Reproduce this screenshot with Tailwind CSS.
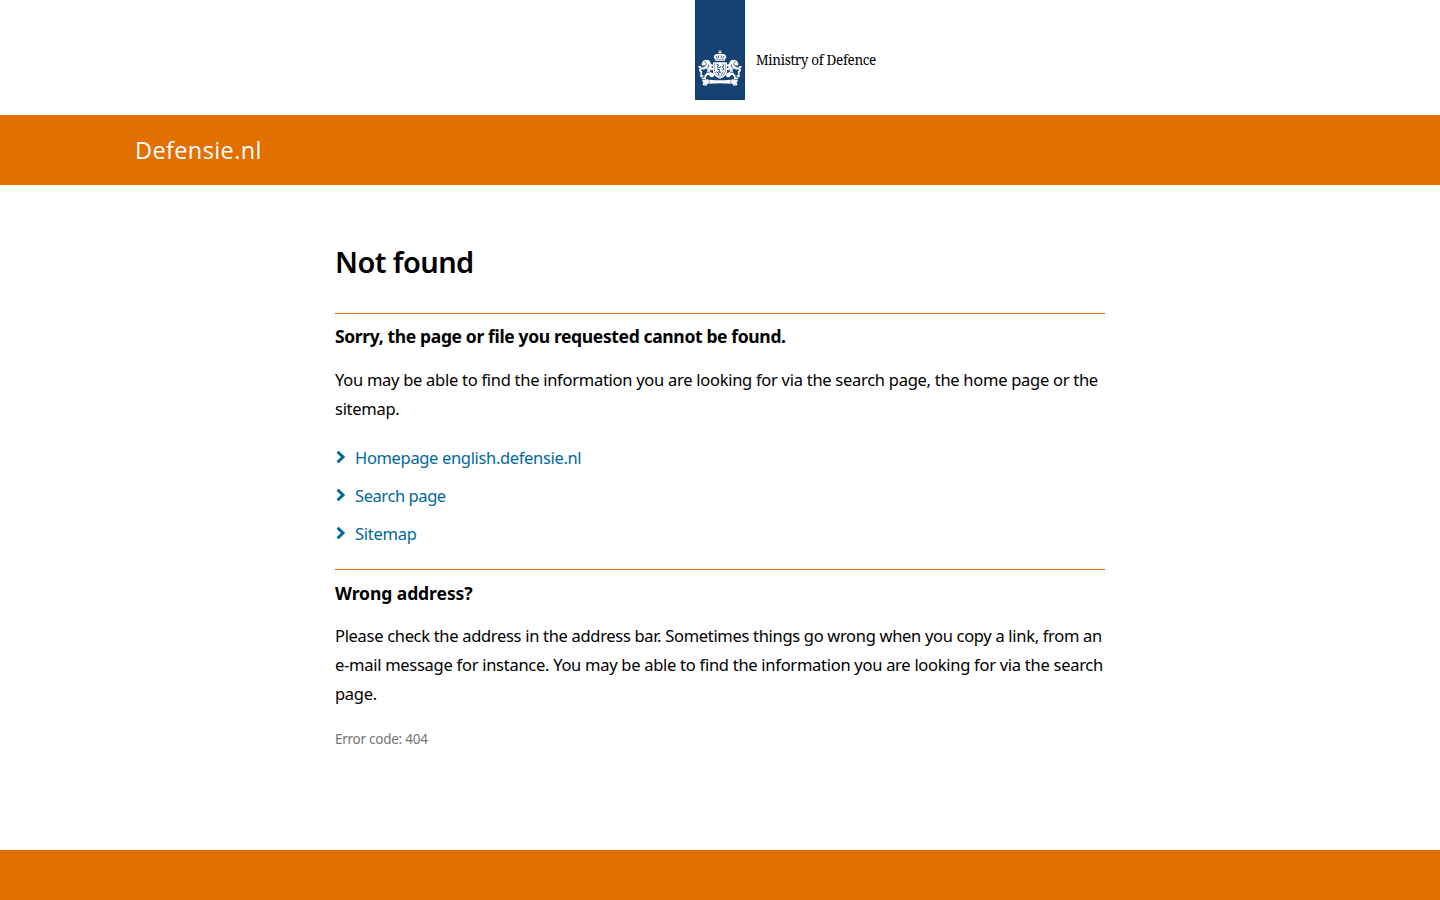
<!DOCTYPE html>
<html lang="en">
<head>
<meta charset="utf-8">
<title>Not found | Defensie.nl</title>
<script src="https://cdn.jsdelivr.net/npm/@tailwindcss/browser@4"></script>
</head>
<body class="flex h-screen flex-col overflow-hidden bg-white font-['Noto_Sans',sans-serif] text-[16.5px] leading-[29px] tracking-[-0.28px] text-black">
<header class="flex h-[115px] shrink-0 pl-[695px]">
  <svg class="h-[100px] w-[50px] shrink-0" viewBox="0 0 150 300">
    <rect width="150" height="300" fill="#154273"/>
    <g fill="#fff">
      <!-- crown -->
      <path d="M73.500 150h3v5h4v3h-4v5h-3v-5h-4v-3h4z"/>
      <path d="M61 182l-5-12 3-6 7-2 9 0 9 0 7 2 3 6-5 12z"/>
      <!-- lion, mirrored for the right side -->
      <g id="lion">
        <path d="M23 184l7-5 10 1 6 5 2 7 7 2-1 5-6 1 5 5 5-1v5l-8 2-5-3 1 8 8 4 4 6-4 6-8-1-5-7-6 3-3 6 2 5H22l-1-4 7-2 1-7 6-6 2-8-5-5-6 3-5-1-4 5-5-2 2-6 7-3 7-1 2-5-8 1-3-4 2-3z"/>
        <path d="M9 197l9 2 1 5-7-1z"/>
        <path d="M20 234l-5-6 2-8-5-9 3-3 7 7-2 8 6 4z"/>
      </g>
      <use href="#lion" transform="matrix(-1 0 0 1 150 0)"/>
      <!-- shield -->
      <path d="M54 187h42v28q0 13-21 21-21-8-21-21z"/>
      <!-- motto ribbon -->
      <path d="M43 239q32 4 64 0v12q-32-3-64 0zM21 240l18-2 3 4-1 9-6 2 1 4-14-2 3-6zM129 240l-18-2-3 4 1 9 6 2-1 4 14-2-3-6z"/>
    </g>
    <g fill="none" stroke="#154273" stroke-width="3">
      <path d="M63 168l4 7M71 166v8M79 166v8M87 168l-4 7" stroke-width="2.500"/>
      <path d="M61 178.500q14-2 28 0" stroke-width="1.500"/>
      <path d="M59 190v24q0 10 16 16 16-6 16-16v-24" stroke-width="1.500"/>
      <path d="M65 193l6 2-4 6 7 2 4-5M66 207l8 2-3 7 7 1M82 192l5 5-6 5 6 4-6 6M64 216l6 2 2 7M84 217l-5 7"/>
      <path d="M28 186l5 2M35 190l-4 8M42 193l-3 10M31 207l9 1M36 217l10-1M105 216l9 1M110 208l9-1M111 203l-3-10M119 198l-4-8M117 188l5-2" stroke-width="2.500"/>
    </g>
  </svg>
  <p class="pt-[46px] pl-[11px] font-['Noto_Serif',serif] text-[13.5px] tracking-[-0.34px]">Ministry of Defence</p>
</header>
<div class="flex h-[70px] shrink-0 items-center bg-[#e17000] pl-[135px] font-['Open_Sans',sans-serif] text-[23.5px] tracking-[0.38px] text-white">Defensie.nl</div>
<main class="mx-auto w-[770px] grow">
  <h1 class="mt-[61px] text-[29px] leading-[32px] font-semibold tracking-[-0.6px]">Not found</h1>
  <section class="mt-[35px] border-t border-[#e17000]">
    <h2 class="mt-2 text-[17.5px] font-bold tracking-[-0.36px]">Sorry, the page or file you requested cannot be found.</h2>
    <p class="mt-[14px] tracking-[-0.275px]">You may be able to find the information you are looking for via the search page, the home page or the<br>sitemap.</p>
    <ul class="mt-[20px] flex flex-col gap-[9px] tracking-[-0.34px] text-[#01689b]">
      <li class="flex"><svg class="mt-[7px] mr-[9px] h-[14px] w-[11px]" viewBox="0 0 11 14" fill="none" stroke="currentColor" stroke-width="3"><path d="M2.600 1.700L8 7l-5.400 5.300"/></svg><a href="#">Homepage english.defensie.nl</a></li>
      <li class="flex"><svg class="mt-[7px] mr-[9px] h-[14px] w-[11px]" viewBox="0 0 11 14" fill="none" stroke="currentColor" stroke-width="3"><path d="M2.600 1.700L8 7l-5.400 5.300"/></svg><a class="tracking-[-0.42px]" href="#">Search page</a></li>
      <li class="flex"><svg class="mt-[7px] mr-[9px] h-[14px] w-[11px]" viewBox="0 0 11 14" fill="none" stroke="currentColor" stroke-width="3"><path d="M2.600 1.700L8 7l-5.400 5.300"/></svg><a class="tracking-[-0.25px]" href="#">Sitemap</a></li>
    </ul>
  </section>
  <section class="mt-[21px] border-t border-[#e17000]">
    <h2 class="mt-[9px] text-[17.5px] font-bold tracking-[-0.07px]">Wrong address?</h2>
    <p class="mt-[13px] whitespace-nowrap tracking-[-0.275px]"><span class="tracking-[-0.31px]">Please check the address in the address bar. Sometimes things go wrong when you copy a link, from an</span><br>e-mail message for instance. You may be able to find the information you are looking for via the search<br>page.</p>
    <p class="mt-[17px] text-[13.5px] tracking-[-0.26px] text-[#757575]">Error code: 404</p>
  </section>
</main>
<footer class="h-[50px] shrink-0 bg-[#e17000]"></footer>
</body>
</html>
